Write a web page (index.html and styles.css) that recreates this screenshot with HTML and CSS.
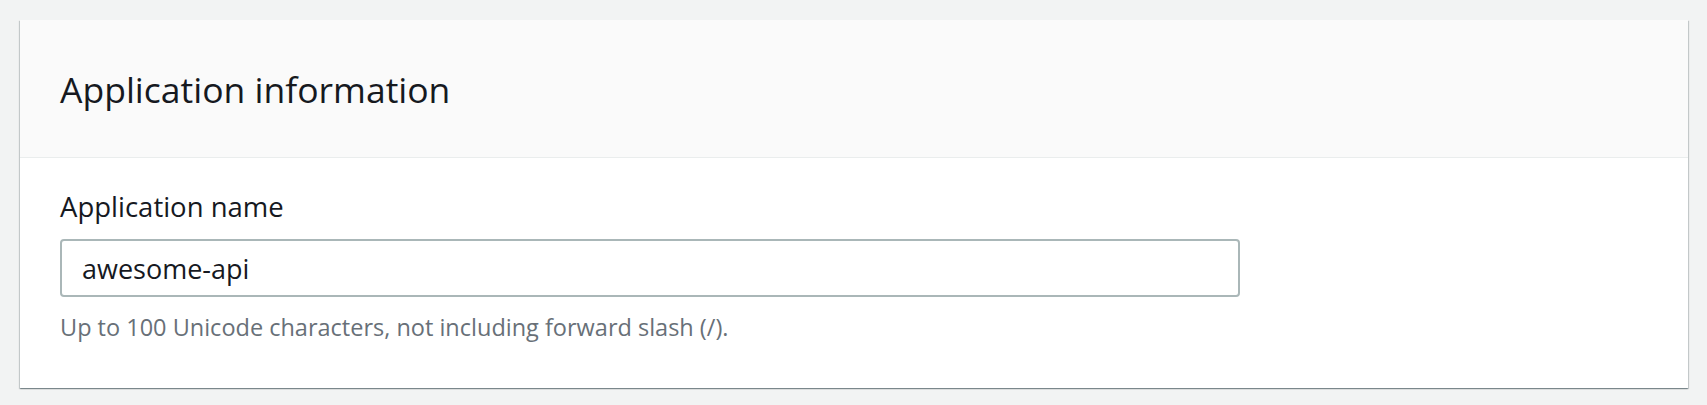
FILE: index.html
```html
<!DOCTYPE html>
<html lang="en">
<head>
<meta charset="utf-8">
<title>Application information</title>
<link rel="stylesheet" href="styles.css">
</head>
<body>
<div class="page">
  <section class="card">
    <header class="card-header">
      <h2 class="card-title">Application information</h2>
    </header>
    <div class="card-body">
      <label class="field-label" for="app-name">Application name</label>
      <input class="field-input" id="app-name" type="text" value="awesome-api">
      <p class="field-hint">Up to 100 Unicode characters, not including forward slash (/).</p>
    </div>
  </section>
</div>
</body>
</html>
```

FILE: styles.css
```css
* { box-sizing: border-box; }
html, body { margin: 0; padding: 0; }
body {
  background: #f2f3f3;
  font-family: "Open Sans", "Noto Sans", sans-serif;
  color: #16191f;
}
.page {
  padding: 20px 19px 17px 20px;
}
.card {
  background: #ffffff;
  height: 368px;
  box-shadow: 0 1px 1px 0 rgba(0,28,36,0.3), 1px 1px 1px 0 rgba(0,28,36,0.15), -1px 1px 1px 0 rgba(0,28,36,0.15);
  display: flex;
  flex-direction: column;
}
.card-header {
  height: 138px;
  background: #fafafa;
  border-bottom: 1px solid #eaeded;
  padding: 0 40px;
  display: flex;
  align-items: center;
}
.card-title {
  margin: 0;
  font-size: 35.5px;
  font-weight: 500;
  line-height: 44px;
}
.card-body {
  padding: 32px 40px 0 40px;
  display: flex;
  flex-direction: column;
  align-items: flex-start;
}
.field-label {
  font-size: 27.5px;
  font-weight: 500;
  line-height: 34px;
  margin-bottom: 15px;
}
.field-input {
  width: 1180px;
  height: 58px;
  border: 2px solid #aab7b8;
  border-radius: 4px;
  padding: 0 20px;
  font-family: inherit;
  font-size: 27px;
  color: #16191f;
  background: #fff;
  outline: none;
}
.field-hint {
  margin: 15px 0 0 0;
  font-size: 23.5px;
  line-height: 30px;
  color: #687078;
}
```
